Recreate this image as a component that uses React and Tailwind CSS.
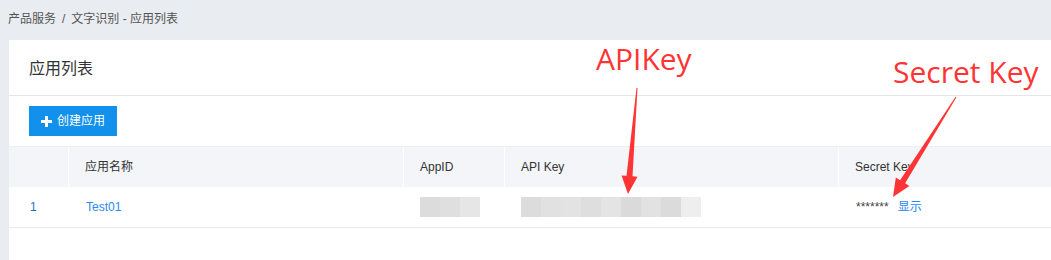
import React from 'react';

const apiKeyBlocks = ['#dcdcdc', '#e1e1e1', '#e3e3e3', '#dedede', '#e4e4e4', '#dadada', '#e2e2e2', '#dbdbdb', '#eeeeee'];
const appIdBlocks = ['#dcdcdc', '#dfdfdf', '#e6e6e6'];

const Blur = ({ blocks }) => (
    <div className="flex">
        {blocks.map((c, i) => (
            <div key={i} className="w-[20px] h-[20px]" style={{ backgroundColor: c }} />
        ))}
    </div>
);

const Arrow = ({ x1, y1, x2, y2 }) => {
    // tapered red arrow, drawn as polygon
    const dx = x2 - x1;
    const dy = y2 - y1;
    const len = Math.sqrt(dx * dx + dy * dy);
    const ux = dx / len;
    const uy = dy / len;
    const px = -uy;
    const py = ux;
    const headLen = 18;
    const hx = x2 - ux * headLen;
    const hy = y2 - uy * headLen;
    const pts = [
        [x1 + px * 0.5, y1 + py * 0.5],
        [hx + px * 3, hy + py * 3],
        [hx + px * 8, hy + py * 8],
        [x2, y2],
        [hx - px * 8, hy - py * 8],
        [hx - px * 3, hy - py * 3],
        [x1 - px * 0.5, y1 - py * 0.5],
    ];
    return <polygon points={pts.map(p => p.join(',')).join(' ')} fill="#ff3434" />;
};

const App = () => {
    return (
        <div className="relative w-[1051px] h-[260px] bg-[#e9ecf0] overflow-hidden" style={{ fontFamily: '"Liberation Sans", "Noto Sans CJK SC", sans-serif' }}>
            {/* Breadcrumb */}
            <div className="h-[40px] pl-[8px] pt-[11px] text-[12px] leading-[16px] text-[#555]">
                产品服务<span className="mx-[6px]">/</span>文字识别 - 应用列表
            </div>

            {/* Card */}
            <div className="ml-[9px] bg-white h-[220px]">
                <div className="h-[56px] border-b border-[#e6e6e6] pl-[20px] pt-[19px] text-[16px] leading-[20px] text-[#333]">
                    应用列表
                </div>
                <div className="pl-[20px] pt-[10px] h-[50px]">
                    <button className="h-[30px] w-[88px] bg-[#1190ec] text-white text-[12px] flex items-center justify-center gap-[5px]">
                        <svg width="11" height="11" viewBox="0 0 11 11">
                            <rect x="4" y="0" width="3" height="11" fill="#fff" />
                            <rect x="0" y="4" width="11" height="3" fill="#fff" />
                        </svg>
                        创建应用
                    </button>
                </div>

                {/* Table */}
                <div className="text-[12px]">
                    <div className="flex h-[41px] bg-[#f4f5f8] border-t border-[#eeeeee] text-[#333] items-center">
                        <div className="w-[60px] h-full border-r border-white" />
                        <div className="w-[335px] h-full border-r border-white pl-[16px] flex items-center">应用名称</div>
                        <div className="w-[101px] h-full border-r border-white pl-[16px] flex items-center">AppID</div>
                        <div className="w-[334px] h-full border-r border-white pl-[16px] flex items-center">API Key</div>
                        <div className="flex-1 h-full pl-[16px] flex items-center">Secret Key</div>
                    </div>
                    <div className="flex h-[41px] border-b border-[#e8e8e8] items-center">
                        <div className="w-[60px] pl-[21px] text-[#1f6fc0]">1</div>
                        <div className="w-[335px] pl-[17px] text-[#2a8af0]">Test01</div>
                        <div className="w-[101px] pl-[16px]"><Blur blocks={appIdBlocks} /></div>
                        <div className="w-[334px] pl-[16px]"><Blur blocks={apiKeyBlocks} /></div>
                        <div className="flex-1 pl-[17px] flex items-center gap-[9px]">
                            <span className="text-[#444] text-[12px]">*******</span>
                            <span className="text-[#2a8af0]">显示</span>
                        </div>
                    </div>
                </div>
            </div>

            {/* Annotations */}
            <div className="absolute left-[596px] top-[39px] text-[30px] leading-[40px] text-[#ff3434]" style={{ fontFamily: '"Open Sans", sans-serif' }}>APIKey</div>
            <div className="absolute left-[893px] top-[52px] text-[30px] leading-[40px] text-[#ff3434]" style={{ fontFamily: '"Open Sans", sans-serif' }}>Secret Key</div>
            <svg className="absolute left-0 top-0" width="1051" height="260">
                <Arrow x1={637} y1={88} x2={628} y2={194} />
                <Arrow x1={956} y1={97} x2={893} y2={197} />
            </svg>
        </div>
    );
};

export default App;
